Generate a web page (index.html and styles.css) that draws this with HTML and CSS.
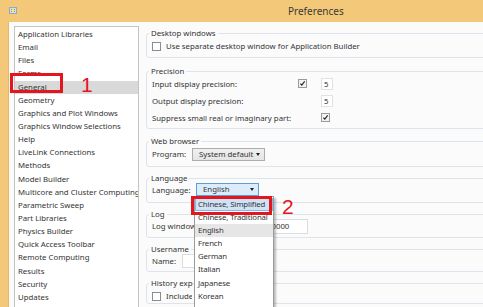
FILE: index.html
```html
<!DOCTYPE html>
<html>
<head>
<meta charset="utf-8">
<link rel="stylesheet" href="styles.css">
</head>
<body>
<div class="window">
  <div class="titlebar">
    <span class="app-icon"></span>
    <span class="title">Preferences</span>
  </div>
  <div class="frame">
    <div class="content">
      <ul class="nav">
        <li>Application Libraries</li>
        <li>Email</li>
        <li>Files</li>
        <li>Forms</li>
        <li class="selected">General</li>
        <li>Geometry</li>
        <li>Graphics and Plot Windows</li>
        <li>Graphics Window Selections</li>
        <li>Help</li>
        <li>LiveLink Connections</li>
        <li>Methods</li>
        <li>Model Builder</li>
        <li>Multicore and Cluster Computing</li>
        <li>Parametric Sweep</li>
        <li>Part Libraries</li>
        <li>Physics Builder</li>
        <li>Quick Access Toolbar</li>
        <li>Remote Computing</li>
        <li>Results</li>
        <li>Security</li>
        <li>Updates</li>
      </ul>
      <div class="pane">
        <fieldset class="group g-desktop">
          <legend>Desktop windows</legend>
          <div class="row"><span class="cb"></span><span class="cb-label">Use separate desktop window for Application Builder</span></div>
        </fieldset>
        <fieldset class="group g-precision">
          <legend>Precision</legend>
          <div class="prec-grid">
            <span class="lbl">Input display precision:</span>
            <span class="cb checked"><svg viewBox="0 0 9 9"><path d="M1.8 4.6 L3.6 6.6 L7.3 1.8" fill="none" stroke="#222" stroke-width="1.4"/></svg></span>
            <span class="num">5</span>
            <span class="lbl">Output display precision:</span>
            <span></span>
            <span class="num">5</span>
            <span class="lbl">Suppress small real or imaginary part:</span>
            <span></span>
            <span class="cb checked"><svg viewBox="0 0 9 9"><path d="M1.8 4.6 L3.6 6.6 L7.3 1.8" fill="none" stroke="#222" stroke-width="1.4"/></svg></span>
          </div>
        </fieldset>
        <fieldset class="group g-web">
          <legend>Web browser</legend>
          <div class="row"><span class="lbl w-prog">Program:</span><span class="select gray">System default<span class="arrow"></span></span></div>
        </fieldset>
        <fieldset class="group g-lang">
          <legend>Language</legend>
          <div class="row"><span class="lbl w-lang">Language:</span><span class="select blue">English<span class="arrow"></span></span></div>
        </fieldset>
        <fieldset class="group g-log">
          <legend>Log</legend>
          <div class="row"><span class="lbl w-log">Log window size:</span><span class="text-input log-input">10000</span></div>
        </fieldset>
        <fieldset class="group g-user">
          <legend>Username</legend>
          <div class="row"><span class="lbl w-name">Name:</span><span class="text-input name-input"></span></div>
        </fieldset>
        <fieldset class="group g-hist">
          <legend class="clip-legend">History export</legend>
          <div class="row"><span class="cb"></span><span class="cb-label include">Include history</span></div>
        </fieldset>
      </div>
    </div>
  </div>

  <ul class="dropdown">
    <li class="hover">Chinese, Simplified</li>
    <li>Chinese, Traditional</li>
    <li class="current">English</li>
    <li>French</li>
    <li>German</li>
    <li>Italian</li>
    <li>Japanese</li>
    <li>Korean</li>
    <li>Spanish</li>
  </ul>

  <span class="mark mark-1"></span>
  <span class="num-label n1">1</span>
  <span class="mark mark-2"></span>
  <span class="num-label n2">2</span>
</div>
</body>
</html>
```

FILE: styles.css
```css
html, body {
  margin: 0;
  padding: 0;
}
body {
  width: 483px;
  height: 307px;
  overflow: hidden;
  font-family: "Noto Sans", "Open Sans", sans-serif;
  font-size: 7.8px;
  color: #333;
  background: #f3c878;
}
.window {
  position: relative;
  width: 483px;
  height: 307px;
  display: flex;
  flex-direction: column;
  overflow: hidden;
}
.titlebar {
  height: 22px;
  flex: none;
  display: flex;
  align-items: center;
  background: #f3c878;
}
.app-icon {
  width: 6px;
  height: 5px;
  margin-left: 9px;
  margin-top: -1px;
  border: 1px solid #9aa7b4;
  background: radial-gradient(circle at 50% 50%, #ffe66a 0 1.5px, #1e62c8 2px);
  box-shadow: inset 0 0 0 1px #cfe1f7;
}
.title {
  margin-left: 271px;
  font-size: 10px;
  color: #3a3a3a;
}
.frame {
  flex: 1;
  display: flex;
  padding-left: 8px;
  min-height: 0;
}
.content {
  flex: 1;
  display: flex;
  gap: 7px;
  padding: 4px 0 0 5px;
  background: #fbfbfb;
  border-left: 1px solid #e6b863;
  min-height: 0;
  overflow: hidden;
}
.nav {
  list-style: none;
  margin: 0;
  padding: 1px 0 0;
  width: 123px;
  flex: none;
  background: #fff;
  border: 1px solid #c4c4c4;
  border-bottom: none;
}
.nav li {
  height: 13.15px;
  line-height: 13.15px;
  padding-left: 3px;
  white-space: nowrap;
  overflow: hidden;
}
.nav li.selected {
  background: #d9d9d9;
}
.pane {
  flex: 1;
  display: flex;
  flex-direction: column;
  padding-top: 1px;
  margin-right: -30px;
  min-width: 0;
}
.group {
  margin: 0 0 5px;
  padding: 0 4px 0 2px;
  border: 1px solid #dde4ec;
  border-radius: 3px;
  min-width: 0;
}
.group legend {
  padding: 0 2px;
  line-height: 12px;
  color: #333;
}
.group legend.clip-legend {
  max-width: 40px;
  overflow: hidden;
  white-space: nowrap;
}
.row {
  display: flex;
  align-items: center;
  height: 14px;
  padding-left: 3px;
  white-space: nowrap;
}
.g-desktop { padding-bottom: 4px; margin-bottom: 7px; }
.g-precision { padding-bottom: 4px; margin-bottom: 6px; }
.g-web { padding-bottom: 5px; }
.g-lang { padding-bottom: 5px; }
.g-lang .row { margin-top: -1px; }
.g-log { padding-bottom: 4px; }
.g-log .row { margin-top: -1px; }
.g-user { padding-bottom: 3px; }
.g-user .row { margin-top: -1px; }

.cb {
  width: 9px;
  height: 9px;
  box-sizing: border-box;
  border: 1px solid #8c8c8c;
  background: #fff;
  flex: none;
  display: inline-flex;
}
.cb.checked {
  background: #f2f2f2;
  border-color: #9a9a9a;
}
.cb svg {
  width: 7px;
  height: 7px;
}
.cb-label {
  margin-left: 5px;
}
.cb-label.include {
  width: 26px;
  overflow: hidden;
}
.prec-grid {
  display: grid;
  grid-template-columns: 146px 23px 14px;
  grid-auto-rows: 13px;
  row-gap: 4px;
  align-items: center;
  padding-left: 3px;
  white-space: nowrap;
}
.num {
  width: 12px;
  height: 12px;
  box-sizing: border-box;
  border: 1px solid #e2e2e2;
  background: #fff;
  line-height: 10px;
  padding-left: 2px;
  color: #333;
}
.lbl {
  white-space: nowrap;
}
.w-prog { width: 40px; }
.w-lang { width: 44px; }
.w-log { width: 42px; overflow: hidden; margin-right: 69px; }
.w-name { width: 30px; }
.select {
  position: relative;
  height: 13px;
  box-sizing: border-box;
  line-height: 11px;
  padding-left: 6px;
}
.select.gray {
  width: 73px;
  border: 1px solid #adadad;
  background: linear-gradient(#f0f0f0, #e5e5e5);
}
.select.blue {
  width: 63px;
  border: 1px solid #5c9fd8;
  background: #dcecfc;
  margin-top: -1px;
}
.arrow {
  position: absolute;
  right: 4px;
  top: 4px;
  border-left: 2.5px solid transparent;
  border-right: 2.5px solid transparent;
  border-top: 3px solid #222;
}
.text-input {
  height: 15px;
  box-sizing: border-box;
  border: 1px solid #dcdcdc;
  background: #fff;
  line-height: 13px;
  padding-left: 3px;
}
.log-input { width: 45px; }
.name-input { width: 80px; height: 14px; }

.dropdown {
  position: absolute;
  left: 194px;
  top: 196px;
  width: 80px;
  height: 130px;
  box-sizing: border-box;
  margin: 0;
  padding: 1px 0 0;
  list-style: none;
  background: #fff;
  border: 1px solid #9c9c9c;
  box-shadow: 2px 2px 2px rgba(0,0,0,0.25);
  letter-spacing: -0.12px;
}
.dropdown li {
  height: 13.1px;
  line-height: 13.1px;
  padding-left: 3px;
  white-space: nowrap;
}
.dropdown li.hover {
  background: #cfe2f6;
  box-shadow: inset 0 0 0 1px #88b6e4;
}
.dropdown li.current {
  background: #e6e6e6;
}

.mark {
  position: absolute;
  border: 3px solid #e3161f;
  box-sizing: border-box;
}
.mark-1 {
  left: 10px;
  top: 73px;
  width: 53px;
  height: 20px;
}
.mark-2 {
  left: 191px;
  top: 196px;
  width: 81px;
  height: 19px;
}
.num-label {
  position: absolute;
  font-family: "Liberation Sans", Arial, sans-serif;
  font-size: 21px;
  line-height: 21px;
  color: #e3161f;
}
.n1 { left: 81px; top: 74px; }
.n2 { left: 282px; top: 196px; }
```
